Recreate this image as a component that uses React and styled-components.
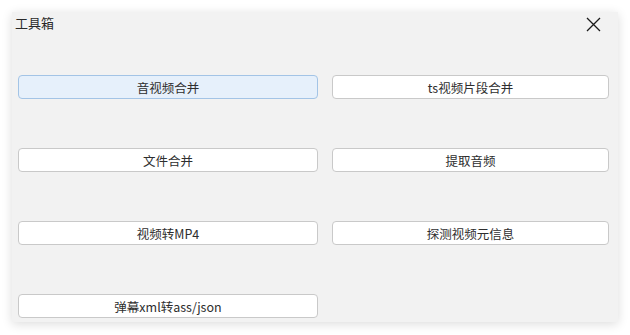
import React from "react";
import styled, { createGlobalStyle } from "styled-components";

const Global = createGlobalStyle`
  html, body { margin: 0; padding: 0; background: #ffffff; }
  body { font-family: "Noto Sans CJK SC", "Noto Sans", sans-serif; }
`;

const Page = styled.div`
  width: 630px;
  height: 335px;
  padding: 12px;
  box-sizing: border-box;
`;

const Dialog = styled.div`
  width: 606px;
  height: 310px;
  background: #f2f2f2;
  box-shadow: 0 2px 10px rgba(0, 0, 0, 0.14);
  box-sizing: border-box;
  display: flex;
  flex-direction: column;
  padding: 0 9px 4px 6px;
`;

const Header = styled.div`
  display: flex;
  align-items: flex-start;
  justify-content: space-between;
  height: 64px;
`;

const Title = styled.div`
  font-size: 13px;
  color: #2a2a2a;
  line-height: 18px;
  margin-top: 2px;
  margin-left: -3px;
`;

const Close = styled.button`
  border: none;
  background: transparent;
  padding: 0;
  margin: 4px 8px 0 0;
  width: 16px;
  height: 16px;
  display: flex;
  align-items: center;
  justify-content: center;
  cursor: pointer;
`;

const Grid = styled.div`
  display: grid;
  grid-template-columns: 300px 277px;
  column-gap: 14px;
  grid-auto-rows: 24px;
  row-gap: 49px;
`;

const ToolButton = styled.button`
  height: 24px;
  box-sizing: border-box;
  border: 1px solid ${(p) => (p.$active ? "#a3c4e6" : "#c9c9c9")};
  background: ${(p) => (p.$active ? "#e6f0fb" : "#ffffff")};
  border-radius: 4px;
  font-family: "Noto Sans CJK SC", "Noto Sans", sans-serif;
  font-size: 12.5px;
  color: #2e2e2e;
  padding: 0;
  display: flex;
  align-items: center;
  justify-content: center;
  cursor: pointer;
`;

const tools = [
  "音视频合并",
  "ts视频片段合并",
  "文件合并",
  "提取音频",
  "视频转MP4",
  "探测视频元信息",
  "弹幕xml转ass/json",
];

export default function App() {
  return (
    <Page>
      <Global />
      <Dialog>
        <Header>
          <Title>工具箱</Title>
          <Close aria-label="close">
            <svg width="15" height="15" viewBox="0 0 15 15">
              <path d="M1 1 L14 14 M14 1 L1 14" stroke="#1a1a1a" strokeWidth="1.3" fill="none" />
            </svg>
          </Close>
        </Header>
        <Grid>
          {tools.map((t, i) => (
            <ToolButton key={t} $active={i === 0}>
              {t}
            </ToolButton>
          ))}
        </Grid>
      </Dialog>
    </Page>
  );
}
